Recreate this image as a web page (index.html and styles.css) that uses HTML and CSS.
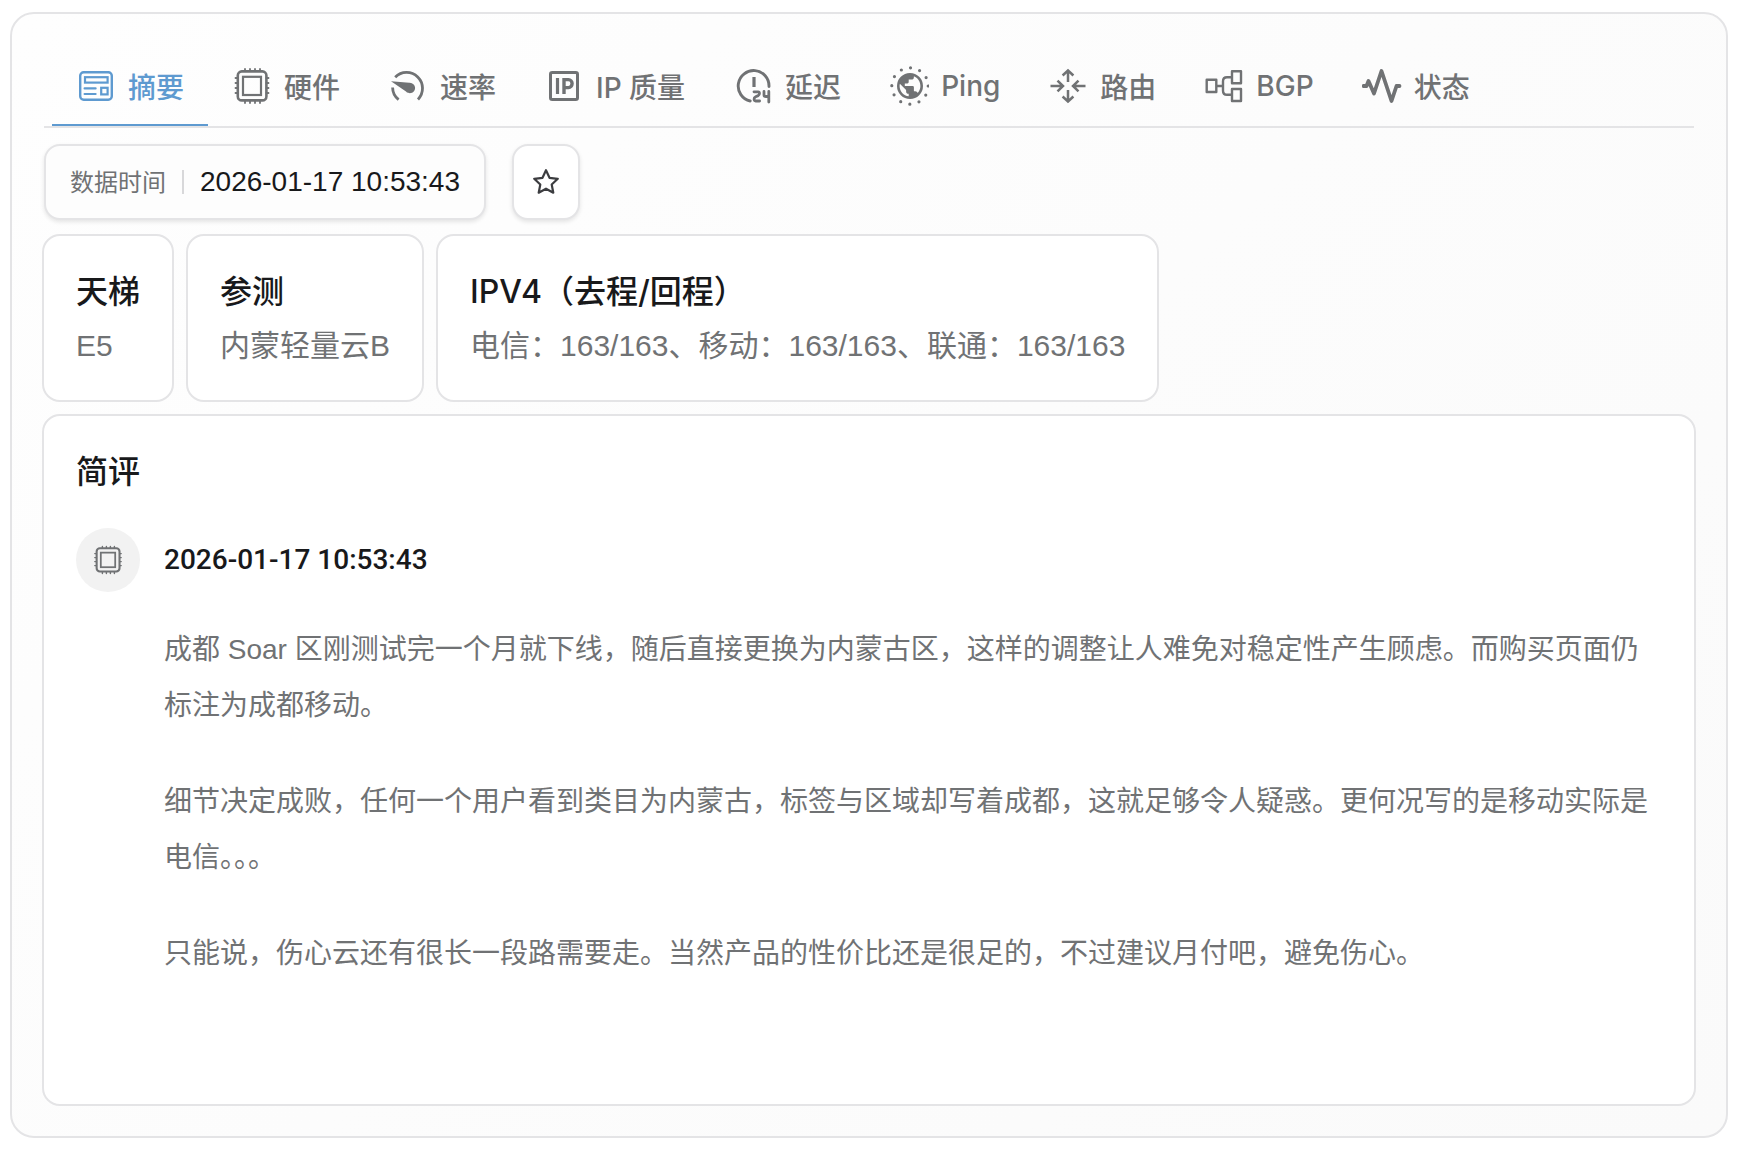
FILE: index.html
```
<!DOCTYPE html>
<html lang="zh-CN">
<head>
    <meta charset="UTF-8">
    <meta name="viewport" content="width=device-width, initial-scale=1.0">
    <title>内蒙轻量云B</title>
    <link rel="stylesheet" href="styles.css">
</head>
<body>

    <main class="panel">
        <!-- 标签栏 -->
        <nav class="tabs">
            <button type="button" class="tab active">
                <svg class="icon" viewBox="0 0 40 40" fill="none" stroke="currentColor">
                    <rect x="4.2" y="6.2" width="31.6" height="27.6" rx="3.5" stroke-width="2.4"/>
                    <rect x="9" y="11.2" width="22.6" height="5.4" stroke-width="2.2"/>
                    <rect x="25.2" y="21.8" width="6.4" height="6.6" stroke-width="2.2"/>
                    <path d="M8.6 22.4h11M8.6 28h11" stroke-width="2.2" stroke-linecap="round"/>
                </svg>
                摘要
            </button>
            <button type="button" class="tab">
                <svg class="icon" viewBox="0 0 40 40" fill="none" stroke="currentColor">
                    <rect x="5.8" y="5.4" width="28.6" height="29" rx="4" stroke-width="2.6"/>
                    <rect x="11" y="10.8" width="18" height="18.2" stroke-width="2.2"/>
                    <path d="M13 5V3M18 5V3M23 5V3M28 5V3M13 35v2M18 35v2M23 35v2M28 35v2M5.5 12h-2M5.5 17h-2M5.5 22h-2M5.5 27h-2M34.5 12h2M34.5 17h2M34.5 22h2M34.5 27h2" stroke-width="1.8" stroke-linecap="round"/>
                </svg>
                硬件
            </button>
            <button type="button" class="tab">
                <svg class="icon" viewBox="0 0 40 40" fill="none" stroke="currentColor">
                    <path d="M7.2 11.2A15.6 15.6 0 0 1 30 33.4M4.6 21.5A15.6 15.6 0 0 0 10.6 33.6" stroke-width="2.8"/>
                    <path d="M3 15.2L21.2 16.8A5.2 5.2 0 1 1 18 25.4Z" fill="currentColor" stroke="none"/>
                </svg>
                速率
            </button>
            <button type="button" class="tab">
                <svg class="icon" viewBox="0 0 40 40" fill="none" stroke="currentColor">
                    <rect x="6.5" y="6.5" width="27" height="27" rx="1.8" stroke-width="3"/>
                    <path d="M13.5 12v16" stroke-width="3.2"/>
                    <path d="M20 28V13.6h4.5a3.6 4 0 0 1 0 8H20" stroke-width="3.4"/>
                </svg>
                IP 质量
            </button>
            <button type="button" class="tab">
                <svg class="icon" viewBox="0 0 40 40" fill="none" stroke="currentColor" stroke-linecap="round" stroke-linejoin="round">
                    <path d="M17.2 35A15.4 15.4 0 1 1 36 20.5" stroke-width="2.9"/>
                    <path d="M21 11v10" stroke-width="3.2" stroke-linecap="butt"/>
                    <path d="M21 25.8h4.2c1.6 0 1.8 3 0 3.8l-2.6 1.2c-2.2 1-1.8 4.2 0 4.2h4" stroke-width="2.8"/>
                    <path d="M31 25.5v3.8c0 1.2 1 1.2 2 1.2h2.6M35.8 25.5V36" stroke-width="2.8"/>
                </svg>
                延迟
            </button>
            <button type="button" class="tab">
                <svg class="icon" viewBox="0 0 40 40">
                    <path transform="translate(5.4 4.4) scale(1.3)" d="M17.9 17.39C17.64 16.59 16.89 16 16 16H15V13A1 1 0 0 0 14 12H8V10H10A1 1 0 0 0 11 9V7H13A2 2 0 0 0 15 5V4.59C17.93 5.77 20 8.64 20 12C20 14.08 19.2 15.97 17.9 17.39M11 19.93C7.05 19.44 4 16.08 4 12C4 11.38 4.08 10.78 4.21 10.21L9 15V16A2 2 0 0 0 11 18M12 2A10 10 0 0 0 2 12A10 10 0 0 0 12 22A10 10 0 0 0 22 12A10 10 0 0 0 12 2Z" fill="currentColor" fill-rule="evenodd"/>
                    <circle cx="21" cy="20" r="18.2" fill="none" stroke="currentColor" stroke-width="3.2" stroke-linecap="round" stroke-dasharray="0 9.53"/>
                </svg>
                Ping
            </button>
            <button type="button" class="tab">
                <svg class="icon" viewBox="0 0 40 40" fill="none" stroke="currentColor" stroke-width="2.5">
                    <path d="M20 16V4.5M14.6 9.5L20 4.5l5.4 5M20 24v11.5M14.6 30.5L20 35.5l5.4-5M2.5 20h12M9.5 14.6L15 20l-5.5 5.4M37.5 20H25.5M30.5 14.6L25 20l5.5 5.4"/>
                </svg>
                路由
            </button>
            <button type="button" class="tab">
                <svg class="icon" viewBox="0 0 40 40" fill="none" stroke="currentColor" stroke-width="2.4" stroke-linejoin="round">
                    <rect x="2.7" y="13.8" width="9.6" height="12.2"/>
                    <rect x="28" y="5.2" width="9" height="12"/>
                    <rect x="28" y="23" width="9" height="12"/>
                    <path d="M12.5 20h6.5M27.500 11.2h-4.500q-4 0-4 4v9.6q0 4 4 4h4.500"/>
                </svg>
                BGP
            </button>
            <button type="button" class="tab">
                <svg class="icon" viewBox="0 0 40 40" fill="none" stroke="currentColor" stroke-width="3.8" stroke-linecap="round" stroke-linejoin="round">
                    <path d="M1.5 20h3l2-5 5.500 12.500L19.500 5l10 30 5-15h3"/>
                </svg>
                状态
            </button>
        </nav>

        <!-- 数据时间 -->
        <div class="toolbar">
            <div class="data-time">
                <span class="data-time-label">数据时间</span>
                <span class="divider"></span>
                <time datetime="2026-01-17T10:53:43">2026-01-17 10:53:43</time>
            </div>
            <button type="button" class="star-btn" aria-label="收藏">
                <svg viewBox="0 0 28 28" fill="none" stroke="currentColor" stroke-width="2.2" stroke-linejoin="round">
                    <path d="M14 2.2l3.500 7.600 8.300 1-6.100 5.700 1.600 8.200-7.300-4-7.300 4 1.600-8.200L2.200 10.800l8.300-1z"/>
                </svg>
            </button>
        </div>

        <!-- 概览卡片 -->
        <section class="cards">
            <div class="card">
                <h2>天梯</h2>
                <p>E5</p>
            </div>
            <div class="card">
                <h2>参测</h2>
                <p>内蒙轻量云B</p>
            </div>
            <div class="card">
                <h2>IPV4（去程/回程）</h2>
                <p>电信：163/163、移动：163/163、联通：163/163</p>
            </div>
        </section>

        <!-- 简评 -->
        <section class="card review">
            <h2>简评</h2>
            <article class="comment">
                <div class="avatar">
                    <svg viewBox="0 0 40 40" fill="none" stroke="currentColor">
                        <rect x="5.8" y="5.4" width="28.6" height="29" rx="4" stroke-width="2.6"/>
                        <rect x="11" y="10.8" width="18" height="18.2" stroke-width="2.2"/>
                        <path d="M13 5V3M18 5V3M23 5V3M28 5V3M13 35v2M18 35v2M23 35v2M28 35v2M5.5 12h-2M5.5 17h-2M5.5 22h-2M5.5 27h-2M34.5 12h2M34.5 17h2M34.5 22h2M34.5 27h2" stroke-width="1.8" stroke-linecap="round"/>
                    </svg>
                </div>
                <div class="comment-body">
                    <time class="comment-time" datetime="2026-01-17T10:53:43">2026-01-17 10:53:43</time>
                    <p>成都 Soar 区刚测试完一个月就下线，随后直接更换为内蒙古区，这样的调整让人难免对稳定性产生顾虑。而购买页面仍标注为成都移动。</p>
                    <p>细节决定成败，任何一个用户看到类目为内蒙古，标签与区域却写着成都，这就足够令人疑惑。更何况写的是移动实际是电信。。。</p>
                    <p>只能说，伤心云还有很长一段路需要走。当然产品的性价比还是很足的，不过建议月付吧，避免伤心。</p>
                </div>
            </article>
        </section>
    </main>

</body>
</html>
```
FILE: styles.css
```
* {
    box-sizing: border-box;
}

body {
    margin: 0;
    padding: 12px 14px 12px 10px;
    background-color: #fff;
    color: #18191b;
    font-family: "Liberation Sans", "Noto Sans CJK SC", sans-serif;
    font-size: 28px;
}

h2, p {
    margin: 0;
}

button {
    font-family: inherit;
    cursor: pointer;
}

.panel {
    padding: 32px 30px 30px;
    border: 2px solid #e4e4e6;
    border-radius: 24px;
    background: linear-gradient(135deg, #fefefe, #fafafa);
}

/* 标签栏 */
.tabs {
    display: flex;
    margin: 0 2px;
    padding: 0 8px;
    border-bottom: 2px solid #e4e4e6;
}

.tab {
    display: flex;
    align-items: center;
    gap: 12px;
    height: 80px;
    padding: 2px 24px 0;
    border: none;
    border-bottom: 2px solid transparent;
    background: none;
    color: #707274;
    font-family: Inter, "Noto Sans CJK SC", sans-serif;
    font-size: 28px;
    font-weight: 500;
    white-space: nowrap;
}

.tab.active {
    color: #5e9ad0;
    border-bottom-color: #5e9ad0;
}

.icon {
    width: 40px;
    height: 40px;
}

/* 数据时间 */
.toolbar {
    display: flex;
    gap: 26px;
    margin: 16px 2px 14px;
}

.data-time {
    display: flex;
    align-items: center;
    gap: 16px;
    height: 76px;
    padding: 0 24px;
    border: 2px solid #e4e4e6;
    border-radius: 16px;
    background-color: #fdfdfd;
    box-shadow: 0 2px 4px rgba(0, 0, 0, 0.1);
}

.data-time-label {
    padding-bottom: 4px;
    color: #707274;
    font-size: 24px;
}

.divider {
    width: 2px;
    height: 24px;
    background-color: #d8d8da;
}

.star-btn {
    display: flex;
    align-items: center;
    justify-content: center;
    width: 68px;
    height: 76px;
    padding: 0;
    border: 2px solid #e4e4e6;
    border-radius: 16px;
    background-color: #fff;
    color: #3c3d40;
    box-shadow: 0 2px 4px rgba(0, 0, 0, 0.1);
}

.star-btn svg {
    width: 28px;
    height: 28px;
}

/* 卡片 */
.cards {
    display: flex;
    flex-wrap: wrap;
    gap: 12px;
    margin-bottom: 12px;
}

.card {
    padding: 32px;
    border: 2px solid #e4e4e6;
    border-radius: 18px;
    background-color: #fff;
}

.card h2 {
    margin-bottom: 8px;
    font-family: Inter, "Noto Sans CJK SC", sans-serif;
    font-size: 32px;
    font-weight: 500;
    line-height: 48px;
}

.card p {
    color: #707274;
    font-size: 30px;
    line-height: 44px;
}

/* 简评 */
.review h2 {
    margin-bottom: 32px;
}

.comment {
    display: flex;
    gap: 24px;
    padding-bottom: 90px;
}

.avatar {
    display: flex;
    align-items: center;
    justify-content: center;
    flex-shrink: 0;
    width: 64px;
    height: 64px;
    border-radius: 50%;
    background-color: #f2f2f2;
    color: #707274;
}

.avatar svg {
    width: 32px;
    height: 32px;
}

.comment-time {
    display: block;
    margin-bottom: 30px;
    font-family: Roboto, sans-serif;
    font-weight: 500;
    line-height: 64px;
}

.comment-body p {
    font-size: 28px;
    line-height: 56px;
}

.comment-body p + p {
    margin-top: 40px;
}
```
